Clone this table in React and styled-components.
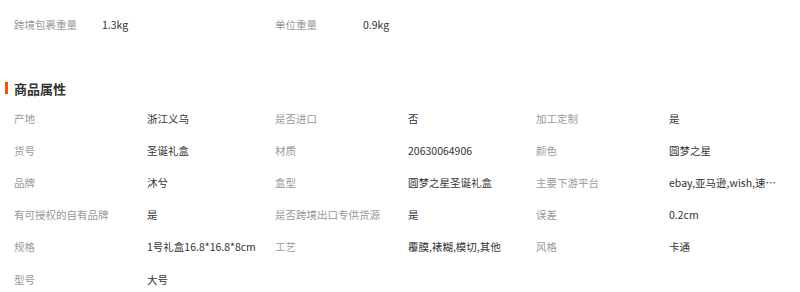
import React from "react";
import styled, { createGlobalStyle } from "styled-components";

const GlobalStyle = createGlobalStyle`
  body {
    margin: 0;
    background: #fff;
    font-family: "Noto Sans CJK SC", "Liberation Sans", sans-serif;
    font-size: 10.5px;
    color: #333;
  }
`;

const Page = styled.div`
  width: 800px;
  height: 292px;
  overflow: hidden;
`;

const Grid = styled.div`
  display: grid;
  grid-template-columns: repeat(${(p) => p.cols}, 261px);
  padding-left: 14px;
`;

const Cell = styled.div`
  display: flex;
  align-items: center;
  height: ${(p) => p.h}px;
`;

const Label = styled.span`
  flex: 0 0 ${(p) => p.w}px;
  color: #999;
  white-space: nowrap;
`;

const Value = styled.span`
  width: 110px;
  color: #333;
  white-space: nowrap;
  overflow: hidden;
  text-overflow: ellipsis;
`;

const HeadWrap = styled.div`
  height: 24px;
  display: flex;
  align-items: center;
  margin: 28px 0 2px 0;
`;

const Heading = styled.h3`
  margin: 0 0 0 5px;
  padding-left: 6px;
  border-left: 3px solid #ff5000;
  height: 12px;
  display: flex;
  align-items: center;
  font-size: 13px;
  font-weight: 700;
  color: #333;
`;

const packing = [
  ["跨境包裹重量", "1.3kg"],
  ["单位重量", "0.9kg"],
];

const attrs = [
  ["产地", "浙江义乌"],
  ["是否进口", "否"],
  ["加工定制", "是"],
  ["货号", "圣诞礼盒"],
  ["材质", "20630064906"],
  ["颜色", "圆梦之星"],
  ["品牌", "沐兮"],
  ["盒型", "圆梦之星圣诞礼盒"],
  ["主要下游平台", "ebay,亚马逊,wish,速卖通"],
  ["有可授权的自有品牌", "是"],
  ["是否跨境出口专供货源", "是"],
  ["误差", "0.2cm"],
  ["规格", "1号礼盒16.8*16.8*8cm"],
  ["工艺", "覆膜,裱糊,模切,其他"],
  ["风格", "卡通"],
  ["型号", "大号"],
];

export default function App() {
  return (
    <Page>
      <GlobalStyle />
      <Grid cols={2}>
        {packing.map(([k, v]) => (
          <Cell key={k} h={48}>
            <Label w={88}>{k}</Label>
            <Value>{v}</Value>
          </Cell>
        ))}
      </Grid>
      <HeadWrap>
        <Heading>商品属性</Heading>
      </HeadWrap>
      <Grid cols={3}>
        {attrs.map(([k, v]) => (
          <Cell key={k} h={32.2}>
            <Label w={133}>{k}</Label>
            <Value>{v}</Value>
          </Cell>
        ))}
      </Grid>
    </Page>
  );
}
